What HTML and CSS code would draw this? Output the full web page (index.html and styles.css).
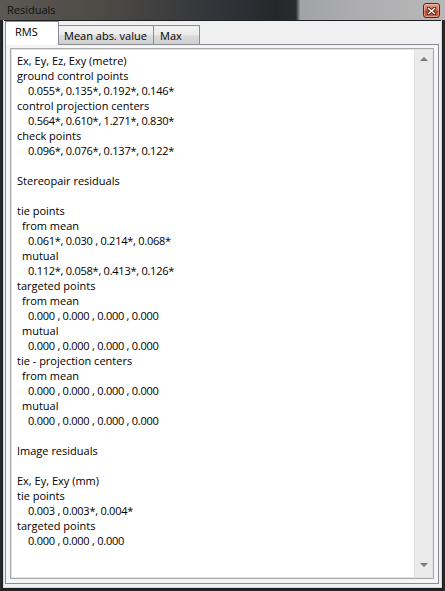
FILE: index.html
```html
<!DOCTYPE html>
<html>
<head>
<meta charset="utf-8">
<link rel="stylesheet" href="styles.css">
</head>
<body>
<div class="window">
  <div class="titlebar">
    <span class="title">Residuals</span>
    <div class="close">
      <svg width="9" height="8" viewBox="0 0 9 8">
        <path d="M1 1 L8 7 M8 1 L1 7" stroke="#4a1a10" stroke-width="3.2" stroke-linecap="square"/>
        <path d="M1 1 L8 7 M8 1 L1 7" stroke="#ffffff" stroke-width="1.6"/>
      </svg>
    </div>
  </div>
  <div class="frame">
    <div class="client">
      <div class="tabs">
        <div class="tab active t-rms">RMS</div>
        <div class="tab t-mean">Mean abs. value</div>
        <div class="tab t-max">Max</div>
      </div>
      <div class="page">
        <div class="textbox">
          <div class="text">
            <div class="l">Ex, Ey, Ez, Exy (metre)</div>
            <div class="l">ground control points</div>
            <div class="l v">0.055*, 0.135*, 0.192*, 0.146*</div>
            <div class="l">control projection centers</div>
            <div class="l v">0.564*, 0.610*, 1.271*, 0.830*</div>
            <div class="l">check points</div>
            <div class="l v">0.096*, 0.076*, 0.137*, 0.122*</div>
            <div class="l"></div>
            <div class="l">Stereopair residuals</div>
            <div class="l"></div>
            <div class="l">tie points</div>
            <div class="l s">from mean</div>
            <div class="l v">0.061*, 0.030 , 0.214*, 0.068*</div>
            <div class="l s">mutual</div>
            <div class="l v">0.112*, 0.058*, 0.413*, 0.126*</div>
            <div class="l">targeted points</div>
            <div class="l s">from mean</div>
            <div class="l v">0.000 , 0.000 , 0.000 , 0.000</div>
            <div class="l s">mutual</div>
            <div class="l v">0.000 , 0.000 , 0.000 , 0.000</div>
            <div class="l">tie - projection centers</div>
            <div class="l s">from mean</div>
            <div class="l v">0.000 , 0.000 , 0.000 , 0.000</div>
            <div class="l s">mutual</div>
            <div class="l v">0.000 , 0.000 , 0.000 , 0.000</div>
            <div class="l"></div>
            <div class="l">Image residuals</div>
            <div class="l"></div>
            <div class="l">Ex, Ey, Exy (mm)</div>
            <div class="l">tie points</div>
            <div class="l v">0.003 , 0.003*, 0.004*</div>
            <div class="l">targeted points</div>
            <div class="l v">0.000 , 0.000 , 0.000</div>
          </div>
          <div class="scrollbar">
            <div class="arrow up"></div>
            <div class="arrow down"></div>
          </div>
        </div>
      </div>
    </div>
  </div>
</div>
</body>
</html>
```
FILE: styles.css
```css
html, body {
  margin: 0;
  padding: 0;
  background: #2a2e31;
}
.window {
  width: 445px;
  height: 591px;
  display: flex;
  flex-direction: column;
  background: #25292c;
  font-family: "Open Sans", "Liberation Sans", sans-serif;
  font-size: 11px;
  overflow: hidden;
}
.titlebar {
  height: 20px;
  flex: none;
  display: flex;
  align-items: center;
  justify-content: space-between;
  padding: 0 5px 0 7px;
  background: linear-gradient(90deg, #5c5852 0%, #4c4945 25%, #33353a 48%, #25282b 62%, #2a2d30 66.5%, #a2a3a5 67.5%, #adadaf 80%, #b8b8b9 100%);
}
.title {
  font-size: 11px;
  color: #111;
  line-height: 20px;
  margin-top: -1px;
}
.close {
  width: 15px;
  height: 13px;
  border: 1px solid #5a2218;
  border-radius: 3px;
  background: linear-gradient(180deg, #e6a08c 0%, #d56a4f 45%, #c2401f 55%, #d46a45 100%);
  box-shadow: inset 0 0 0 1px rgba(255,255,255,0.35);
  display: flex;
  align-items: center;
  justify-content: center;
  margin-top: 1px;
}
.frame {
  flex: 1;
  margin: 0 3px 3px 3px;
  border: 1px solid #d8d8d8;
  border-top: none;
  display: flex;
  flex-direction: column;
  box-shadow: 0 1px 0 1px #1c1f21;
}
.client {
  flex: 1;
  background: #f0f0f0;
  padding: 0 2px 3px 1px;
  display: flex;
  flex-direction: column;
  border-top: 1px solid #1c1f21;
}
.tabs {
  display: flex;
  align-items: flex-end;
  height: 23px;
  position: relative;
  z-index: 1;
}
.tab {
  box-sizing: border-box;
  height: 19px;
  padding-top: 2px;
  line-height: 16px;
  white-space: nowrap;
  color: #000;
  border: 1px solid #898c95;
  border-bottom: none;
  margin-left: -1px;
  background: linear-gradient(180deg, #f3f3f3 0%, #ebebeb 50%, #dddddd 51%, #cfcfcf 100%);
}
.t-mean { width: 96px; padding-left: 5px; }
.t-max { width: 47px; padding-left: 6px; }
.tab.active {
  width: 54px;
  height: 24px;
  padding-top: 2px;
  padding-left: 9px;
  margin-left: 0;
  background: #ffffff;
  margin-bottom: -1px;
  position: relative;
  z-index: 2;
}
.page {
  flex: 1;
  border: 1px solid #898c95;
  background: #f5f5f5;
  padding: 3px 4px 4px 4px;
  display: flex;
  flex-direction: column;
}
.textbox {
  flex: 1;
  display: flex;
  border: 1px solid #a9a9a9;
  box-shadow: inset 0 0 0 1px #e2e3ea;
  background: #fff;
  padding: 1px;
}
.text {
  flex: 1;
  padding: 3px 0 0 5px;
  color: #000;
}
.l {
  height: 15px;
  line-height: 15px;
  white-space: pre;
}
.l.s { padding-left: 5px; }
.l.v { padding-left: 11px; letter-spacing: -0.25px; }
.scrollbar {
  width: 17px;
  background: #eaeaea;
  border-left: 1px solid #e2e2e2;
  display: flex;
  flex-direction: column;
  justify-content: space-between;
  padding: 5px 0 5px 0;
}
.arrow {
  width: 0;
  height: 0;
  margin: 0 auto;
  border-left: 4px solid transparent;
  border-right: 4px solid transparent;
}
.arrow.up {
  border-bottom: 4px solid #7a7a7a;
  margin-top: 2px;
}
.arrow.down {
  border-top: 4px solid #7a7a7a;
  margin-bottom: 5px;
}
```
